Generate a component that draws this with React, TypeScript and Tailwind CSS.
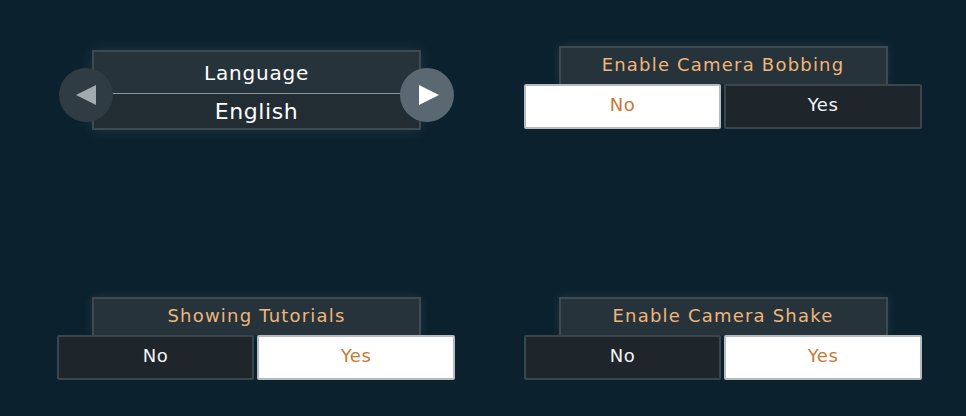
import React from "react";

const font = { fontFamily: "'DejaVu Sans', 'Open Sans', sans-serif" };

function Toggle({ label, value }: { label: string; value: boolean }) {
  const on = "bg-white border-2 border-[#b4bcc1] text-[#c77a36]";
  const off = "bg-[#1e252b] border-2 border-[#3a464e] text-[#f2f4f5]";
  return (
    <div className="flex flex-col items-center">
      <div className="w-[329px] h-[38px] flex items-center justify-center pb-[4px] bg-[#27333b] border-2 border-b-0 border-[#3d4a52] text-[#efb57a] text-[18px] tracking-[1.2px] shadow-[0_0_10px_rgba(200,215,225,0.12)]">
        {label}
      </div>
      <div className="flex gap-[3px] w-full">
        <div className={`w-[197px] h-[45px] flex items-center justify-center pb-[4px] rounded-[2px] text-[18px] tracking-[0.5px] ${!value ? on : off}`}>
          No
        </div>
        <div className={`w-[198px] h-[45px] flex items-center justify-center pb-[4px] rounded-[2px] text-[18px] tracking-[0.5px] ${value ? on : off}`}>
          Yes
        </div>
      </div>
    </div>
  );
}

function LanguagePicker() {
  return (
    <div className="relative flex justify-center pt-[4px]">
      <div className="w-[329px] h-[80px] flex flex-col bg-[#222c33] border-2 border-[#3d4a52] shadow-[0_0_14px_rgba(200,215,225,0.12)]">
        <div className="h-[42px] flex items-center justify-center bg-[#27333b] text-white text-[20px] tracking-[0.8px] border-b border-[#8d989e]">
          Language
        </div>
        <div className="flex-1 flex items-center justify-center text-white text-[22px] tracking-[0.6px]">
          English
        </div>
      </div>
      <div className="absolute left-[2px] top-[22px] w-[54px] h-[54px] rounded-full bg-[#2f3c44] flex items-center justify-center">
        <svg width="26" height="26" viewBox="0 0 26 26">
          <polygon points="3,13 23,3 23,23" fill="#a2abb0" />
        </svg>
      </div>
      <div className="absolute right-[2px] top-[22px] w-[54px] h-[54px] rounded-full bg-[#5a6971] flex items-center justify-center">
        <svg width="26" height="26" viewBox="0 0 26 26">
          <polygon points="5,3 25,13 5,23" fill="#ffffff" />
        </svg>
      </div>
    </div>
  );
}

export default function App() {
  return (
    <div style={font} className="w-[966px] h-[416px] bg-[#0b212e] pt-[46px] pl-[57px] overflow-hidden">
      <div className="grid grid-cols-[399px_398px] gap-x-[68px] gap-y-[167px]">
        <LanguagePicker />
        <Toggle label="Enable Camera Bobbing" value={false} />
        <Toggle label="Showing Tutorials" value={true} />
        <Toggle label="Enable Camera Shake" value={true} />
      </div>
    </div>
  );
}
